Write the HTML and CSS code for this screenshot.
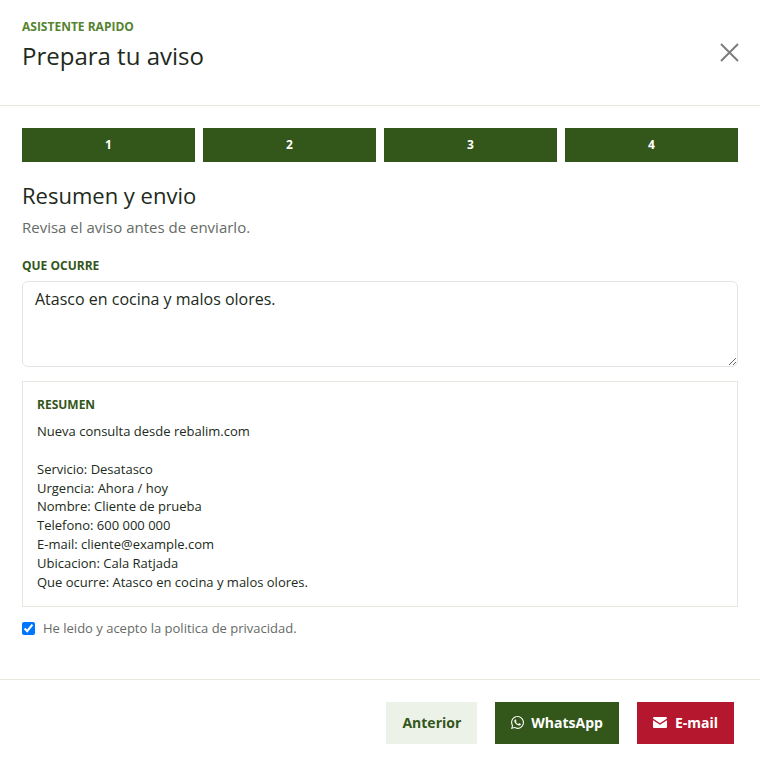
FILE: index.html
```html
<!DOCTYPE html>
<html lang="es">
<head>
    <meta charset="UTF-8">
    <meta name="viewport" content="width=device-width, initial-scale=1.0">
    <title>Prepara tu aviso</title>
    <link rel="stylesheet" href="styles.css">
</head>
<body>
    <div class="modal">
        <div class="modal-header">
            <div>
                <div class="eyebrow">ASISTENTE RAPIDO</div>
                <h1 class="modal-title">Prepara tu aviso</h1>
            </div>
            <button class="close-btn" aria-label="Cerrar">
                <svg width="20" height="20" viewBox="0 0 20 20"><path d="M1 1 18 18M18 1 1 18" fill="none" stroke="#7d7d7d" stroke-width="2"/></svg>
            </button>
        </div>
        <div class="modal-body">
            <div class="steps">
                <div class="step">1</div>
                <div class="step">2</div>
                <div class="step">3</div>
                <div class="step">4</div>
            </div>
            <h2 class="step-title">Resumen y envio</h2>
            <p class="step-text">Revisa el aviso antes de enviarlo.</p>
            <label class="field-label" for="detail">QUE OCURRE</label>
            <textarea class="field-input" id="detail">Atasco en cocina y malos olores.</textarea>
            <div class="summary">
                <div class="summary-title">RESUMEN</div>
                <div class="summary-text">Nueva consulta desde rebalim.com

Servicio: Desatasco
Urgencia: Ahora / hoy
Nombre: Cliente de prueba
Telefono: 600 000 000
E-mail: cliente@example.com
Ubicacion: Cala Ratjada
Que ocurre: Atasco en cocina y malos olores.</div>
            </div>
            <label class="consent">
                <input type="checkbox" checked>
                <span>He leido y acepto la politica de privacidad.</span>
            </label>
        </div>
        <div class="modal-footer">
            <button class="btn btn-light">Anterior</button>
            <button class="btn btn-green">
                <svg width="13" height="13" viewBox="0 0 24 24"><path fill="#fff" d="M17.5 14.400c-.3-.15-1.770-.87-2.040-.97-.27-.1-.47-.15-.67.15-.2.3-.77.97-.94 1.170-.17.2-.35.22-.65.07-.3-.15-1.260-.46-2.400-1.480-.89-.79-1.490-1.770-1.660-2.070-.17-.3-.02-.46.13-.61.130-.130.3-.35.45-.52.15-.17.2-.3.3-.5.1-.2.05-.37-.02-.52-.08-.15-.67-1.620-.92-2.220-.24-.58-.49-.5-.67-.51h-.57c-.2 0-.52.07-.79.37-.27.3-1.040 1.020-1.040 2.490s1.070 2.890 1.220 3.090c.15.2 2.100 3.200 5.080 4.490.71.31 1.260.49 1.690.63.71.23 1.360.19 1.870.12.57-.09 1.770-.72 2.020-1.420.25-.7.25-1.300.17-1.420-.07-.13-.27-.2-.57-.35zM12.050 21.800h0c-1.770 0-3.510-.48-5.030-1.380l-.36-.21-3.740.98 1-3.650-.23-.37a9.860 9.860 0 0 1-1.510-5.260c0-5.450 4.440-9.890 9.890-9.890 2.640 0 5.120 1.030 6.990 2.900a9.830 9.830 0 0 1 2.890 7c0 5.450-4.440 9.880-9.900 9.880zM20.460 3.490A11.820 11.820 0 0 0 12.050 0C5.500 0 .16 5.340.16 11.890c0 2.100.55 4.140 1.590 5.950L.06 24l6.310-1.650a11.880 11.880 0 0 0 5.680 1.450h.01c6.550 0 11.890-5.340 11.890-11.900 0-3.180-1.240-6.160-3.490-8.410z"/></svg>
                WhatsApp
            </button>
            <button class="btn btn-red">
                <svg width="14" height="11" viewBox="0 0 14 11"><path fill="#fff" d="M1.300 0h11.400c.7 0 1.300.6 1.300 1.300v.3L7 6.200 0 1.600v-.3C0 .6.600 0 1.300 0zM0 3.200l7 4.600 7-4.600v6.500c0 .7-.6 1.300-1.300 1.300H1.300C.6 11 0 10.400 0 9.700z"/></svg>
                E-mail
            </button>
        </div>
    </div>
</body>
</html>
```
FILE: styles.css
```css
body {
    margin: 0;
    background-color: #fff;
    font-family: "Open Sans", Arial, sans-serif;
    color: #212a20;
}
.modal {
    width: 760px;
    height: 766px;
    display: flex;
    flex-direction: column;
}
.modal-header {
    height: 106px;
    box-sizing: border-box;
    padding: 18px 20px 0 22px;
    display: flex;
    justify-content: space-between;
    align-items: flex-start;
    border-bottom: 1px solid #e8e6df;
}
.eyebrow {
    font-size: 12px;
    line-height: 18px;
    font-weight: 700;
    color: #55832f;
}
.modal-title {
    margin: 3px 0 0;
    font-size: 24px;
    line-height: 33px;
    font-weight: 400;
}
.close-btn {
    margin-top: 25px;
    padding: 0;
    border: none;
    background: none;
    display: flex;
}
.modal-body {
    flex: 1;
    padding: 22px 22px 0;
}
.steps {
    display: grid;
    grid-template-columns: repeat(4, 1fr);
    gap: 8px;
}
.step {
    height: 34px;
    line-height: 34px;
    text-align: center;
    background-color: #33561a;
    color: #fff;
    font-size: 12px;
    font-weight: 700;
}
.step-title {
    margin: 18px 0 0;
    font-size: 22px;
    line-height: 30px;
    font-weight: 400;
}
.step-text {
    margin: 7px 0 0;
    font-size: 15px;
    line-height: 20px;
    color: #666b66;
}
.field-label {
    display: block;
    margin-top: 20px;
    font-size: 12px;
    line-height: 18px;
    font-weight: 700;
    color: #33561a;
}
.field-input {
    display: block;
    width: 100%;
    height: 86px;
    box-sizing: border-box;
    margin-top: 6px;
    padding: 5px 12px;
    border: 1px solid #e4e4e1;
    border-radius: 6px;
    outline: none;
    font-family: inherit;
    font-size: 16px;
    line-height: 24px;
    color: #212a20;
}
.summary {
    margin-top: 14px;
    padding: 14px 14px 5px;
    border: 1px solid #e8e6df;
    height: 226px;
    box-sizing: border-box;
}
.summary-title {
    font-size: 12px;
    line-height: 18px;
    font-weight: 700;
    color: #33561a;
}
.summary-text {
    margin-top: 8px;
    font-size: 13px;
    line-height: 18.850px;
    white-space: pre-line;
}
.consent {
    display: flex;
    align-items: center;
    margin-top: 12px;
    font-size: 13px;
    line-height: 18px;
    color: #666b66;
}
.consent input {
    width: 13px;
    height: 13px;
    margin: 0 8px 0 0;
}
.modal-footer {
    height: 87px;
    box-sizing: border-box;
    padding: 22px 26px 0 0;
    display: flex;
    justify-content: flex-end;
    align-items: flex-start;
    gap: 18px;
    border-top: 1px solid #e8e6df;
}
.btn {
    height: 42px;
    padding: 0 16px 2px;
    border: none;
    display: flex;
    align-items: center;
    gap: 7px;
    font-family: inherit;
    font-size: 14px;
    font-weight: 700;
}
.btn-light {
    background-color: #edf2e9;
    color: #33561a;
}
.btn-green {
    background-color: #33561a;
    color: #fff;
}
.btn-red {
    gap: 8px;
    background-color: #b5182e;
    color: #fff;
}
```
